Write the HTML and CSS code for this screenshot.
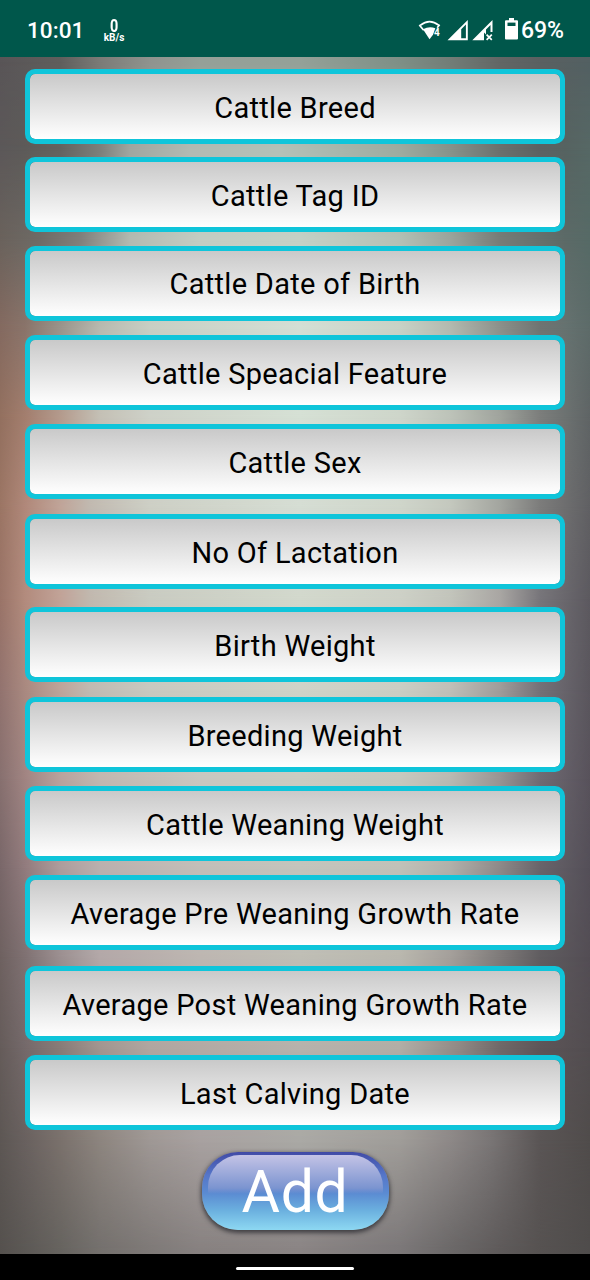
FILE: index.html
```html
<!DOCTYPE html>
<html lang="en">
<head>
<meta charset="utf-8">
<title>Cattle</title>
<link rel="stylesheet" href="styles.css">
</head>
<body>
<header class="status">
  <span class="clock">10:01</span>
  <span class="speed"><b>0</b><small>kB/s</small></span>
  <svg class="signals" width="86" height="28" viewBox="417 16 86 28">
    <path d="M420.2 24.3Q429.5 16.8 439 24.3" fill="none" stroke="#fff" stroke-width="1.7"/>
    <path d="M419.3 24l4.4 5.2M439.6 23.8l-2.4 3" stroke="#fff" stroke-width="1.7"/>
    <path d="M423 28.3Q429.5 24.6 435.3 27.3L433 33.7L429.5 38.2Z" fill="#fff"/>
    <text x="434.1" y="35" class="wifi-gen">4</text>
    <path fill-rule="evenodd" d="M447.5 39.3L467.8 19V39.3ZM461.2 28.2L465.9 23.5V37.3H461.2Z" fill="#fff"/>
    <path d="M472.3 39.3L492.5 19V31H490.5V24L486 28.5V33.5L484 31.6V39.3Z" fill="#fff"/>
    <path d="M486.6 33.6l5.2 5.2M491.8 33.6l-5.2 5.2" stroke="#fff" stroke-width="1.7"/>
  </svg>
  <svg class="battery" width="13" height="22" viewBox="0 0 13 22">
    <path d="M4 0H9V2.3H12Q13 2.3 13 3.3V20.5Q13 21.5 12 21.5H1Q0 21.5 0 20.5V3.3Q0 2.3 1 2.3H4Z" fill="#fff"/>
    <path d="M2.5 4.6H10.5V8H2.5Z" fill="#00574b"/>
  </svg>
  <span class="percent">69%</span>
</header>
<main class="screen">
  <div class="backdrop">
    <i class="band b1"></i><i class="band b2"></i><i class="band b3"></i><i class="band b4"></i>
    <i class="band b5"></i><i class="band b6"></i><i class="band b7"></i><i class="band b8"></i>
    <i class="band b9"></i><i class="band b10"></i><i class="band b11"></i><i class="band b12"></i>
    <i class="band b13"></i><i class="band b14"></i>
  </div>
  <div class="content">
    <div class="fields">
      <div class="field"><span>Cattle Breed</span></div>
      <div class="field"><span>Cattle Tag ID</span></div>
      <div class="field"><span>Cattle Date of Birth</span></div>
      <div class="field"><span>Cattle Speacial Feature</span></div>
      <div class="field"><span>Cattle Sex</span></div>
      <div class="field"><span>No Of Lactation</span></div>
      <div class="field"><span>Birth Weight</span></div>
      <div class="field"><span>Breeding Weight</span></div>
      <div class="field"><span>Cattle Weaning Weight</span></div>
      <div class="field"><span>Average Pre Weaning Growth Rate</span></div>
      <div class="field"><span>Average Post Weaning Growth Rate</span></div>
      <div class="field"><span>Last Calving Date</span></div>
    </div>
    <button class="add"><span>Add</span></button>
  </div>
</main>
<footer class="nav"><div class="handle"></div></footer>
</body>
</html>
```
FILE: styles.css
```css
* { box-sizing: border-box; }
body {
  margin: 0;
  width: 590px;
  height: 1280px;
  display: flex;
  flex-direction: column;
  overflow: hidden;
  font-family: Roboto, sans-serif;
  background: #000;
}
.status {
  height: 57px;
  flex: none;
  display: flex;
  align-items: center;
  padding: 4px 26px 0 27px;
  background: #00574b;
  color: #fff;
}
.clock { width: 76px; font-size: 22.6px; font-weight: 500; line-height: 28px; white-space: nowrap; }
.speed { width: 22px; display: flex; flex-direction: column; align-items: center; }
.speed b { font-size: 18px; line-height: 15px; font-weight: 700; transform: scaleX(.8); }
.speed small { font-size: 10px; line-height: 10px; font-weight: 700; white-space: nowrap; }
.signals { margin-left: auto; }
.wifi-gen { font: 700 10px Roboto, sans-serif; fill: #fff; }
.battery { margin: 0 3px 4px 2px; }
.percent { font-size: 23px; font-weight: 500; line-height: 28px; white-space: nowrap; }

.screen { height: 1197px; flex: none; display: grid; }
.backdrop, .content { grid-area: 1 / 1; min-height: 0; }
.backdrop { display: grid; }

/* Each band fades in over the one before, from --from to --to. */
.band {
  grid-area: 1 / 1;
  -webkit-mask-image: linear-gradient(transparent var(--from), #000 var(--to));
  mask-image: linear-gradient(transparent var(--from), #000 var(--to));
}
.b1 { --from: -2px; --to: -1px; background: linear-gradient(90deg, #595557 0, #5f5e5c 60px, #7b7b77 100px, #8f938e 150px, #95a098 200px, #94a198 300px, #7e8f86 400px, #727d77 450px, #626665 500px, #5a6061 540px, #536062 590px); }
.b2 { --from: 5px; --to: 93px; background: linear-gradient(90deg, #5c5859 0, #5d5b59 25px, #636360 60px, #7c7f7b 100px, #a0a6a0 130px, #b1bab3 190px, #b3c1b8 280px, #9daba0 400px, #87938b 450px, #6b716e 500px, #5c6162 540px, #566361 565px, #566865 590px); }
.b3 { --from: 93px; --to: 183px; background: linear-gradient(90deg, #6a625c 0, #6e6b66 40px, #7f7f7b 80px, #b3bab1 130px, #c3cdc3 200px, #c4d1c6 300px, #b4c0b5 400px, #9ba59d 450px, #767c77 500px, #5c6a67 565px, #566a66 590px); }
.b4 { --from: 183px; --to: 271px; background: linear-gradient(90deg, #846a60 0, #8a746a 25px, #9a948b 60px, #b8bab0 100px, #c8cfc4 150px, #d4dfd5 300px, #c8d2c6 400px, #b3bab0 450px, #8c918b 500px, #6f7472 540px, #667270 565px, #5d6b69 590px); }
.b5 { --from: 271px; --to: 360px; background: linear-gradient(90deg, #93705f 0, #a37e6e 25px, #b49a8c 60px, #c4c0b5 100px, #ced1c8 150px, #d5e0d4 300px, #ced5ca 400px, #bdc3b9 450px, #a0a49d 500px, #7c7e7c 540px, #6d7271 565px, #5f6465 590px); }
.b6 { --from: 360px; --to: 450px; background: linear-gradient(90deg, #9b7564 0, #b0887a 25px, #c0a498 60px, #c1b9b0 90px, #cdcfc5 150px, #d5ddd3 300px, #cfd5ca 400px, #c4c8be 450px, #a3a59f 500px, #7c7c7b 540px, #606063 590px); }
.b7 { --from: 450px; --to: 542px; background: linear-gradient(90deg, #9a7468 0, #b28b7d 25px, #c1a297 60px, #c1b8ae 90px, #c9cbc1 150px, #d2d8cc 300px, #cdd0c6 400px, #c2c4bb 450px, #a9a6a3 500px, #77757a 540px, #5c595f 590px); }
.b8 { --from: 542px; --to: 633px; background: linear-gradient(90deg, #92736f 0, #a98980 25px, #bda49a 60px, #c0bab2 90px, #c8c9c0 150px, #cfd3c8 300px, #cbcec4 400px, #bfbfb8 450px, #9f9c9a 500px, #747178 540px, #5a565d 590px); }
.b9 { --from: 633px; --to: 722px; background: linear-gradient(90deg, #87706f 0, #a08482 25px, #b8a29d 60px, #c1b7b0 100px, #c9c7c0 200px, #c9ccc2 300px, #c6c8be 400px, #b9b9b2 450px, #989493 500px, #6f6b73 540px, #58525b 590px); }
.b10 { --from: 722px; --to: 811px; background: linear-gradient(90deg, #796769 0, #917b7d 25px, #ad9c9c 60px, #bab0ae 100px, #c2beb8 200px, #c3c4bc 300px, #c0c1b8 400px, #b1b0aa 450px, #8d8988 500px, #68646a 540px, #544f58 590px); }
.b11 { --from: 811px; --to: 900px; background: linear-gradient(90deg, #6e6160 0, #7f7172 25px, #9b8f90 60px, #b3a8a8 100px, #bdb6b1 200px, #bfbeb5 300px, #b9b7ae 400px, #a49f9a 450px, #7e7a79 500px, #605d60 540px, #534d54 590px); }
.b12 { --from: 900px; --to: 991px; background: linear-gradient(90deg, #655c5a 0, #74696a 25px, #877b77 60px, #a1958f 100px, #b0a6a0 150px, #b6b2ac 300px, #b1aea6 400px, #8f8884 460px, #6f6868 500px, #5d5558 540px, #524d50 590px); }
.b13 { --from: 991px; --to: 1083px; background: linear-gradient(90deg, #5d5754 0, #69615f 25px, #7a716c 60px, #8d857f 100px, #9f9895 150px, #a8a1a0 200px, #aaa9a5 300px, #a09d99 400px, #8e8988 450px, #7a7676 490px, #5a5555 540px, #504c4b 590px); }
.b14 { --from: 1083px; --to: 1193px; background: linear-gradient(90deg, #55514e 0, #66635f 60px, #74706d 100px, #7e7977 150px, #878180 200px, #8a8484 300px, #7b7778 400px, #6b6868 450px, #5e5a5a 500px, #565251 540px, #4f4c4b 590px); }

.content {
  z-index: 1;
  display: flex;
  flex-direction: column;
  align-items: center;
  padding-top: 12px;
}
.fields {
  width: 540px;
  display: grid;
  grid-template-rows: 88px 88.5px 89.5px 89px 90px 93px 90px 89px 89px 91px 89px 76px;
}
.field {
  height: 75px;
  border: 5px solid #0fc5da;
  border-radius: 10px;
  background: linear-gradient(#c9c9c9, #fff) padding-box;
  display: flex;
  align-items: center;
  justify-content: center;
  padding-top: 3px;
  padding-bottom: 1px;
  color: #000;
  font-size: 29px;
  line-height: 36px;
  letter-spacing: .3px;
  white-space: nowrap;
}
.add {
  margin: 21px 0 0;
  width: 187px;
  height: 78px;
  padding: 3px 6px;
  border: 0;
  border-radius: 36px;
  background: linear-gradient(#4149a6 0, #4451ab 4%, #5576c9 30%, #5b8bd2 53%, #6bb0df 75%, #8dd8f2 100%);
  box-shadow: 0 2px 4px 1px rgba(40, 40, 45, .75);
  color: #fff;
  font: 400 59px/74px Roboto, sans-serif;
  letter-spacing: .6px;
}
.add span {
  display: block;
  height: 72px;
  border-radius: 32px;
  background: linear-gradient(#c4c3e6, #7b94d0 46%, rgba(91, 139, 210, 0) 54%);
}
.nav {
  flex: 1;
  background: #000;
  display: flex;
  justify-content: center;
  padding-top: 13px;
}
.handle { width: 118px; height: 3px; border-radius: 2px; background: #fff; }
```
